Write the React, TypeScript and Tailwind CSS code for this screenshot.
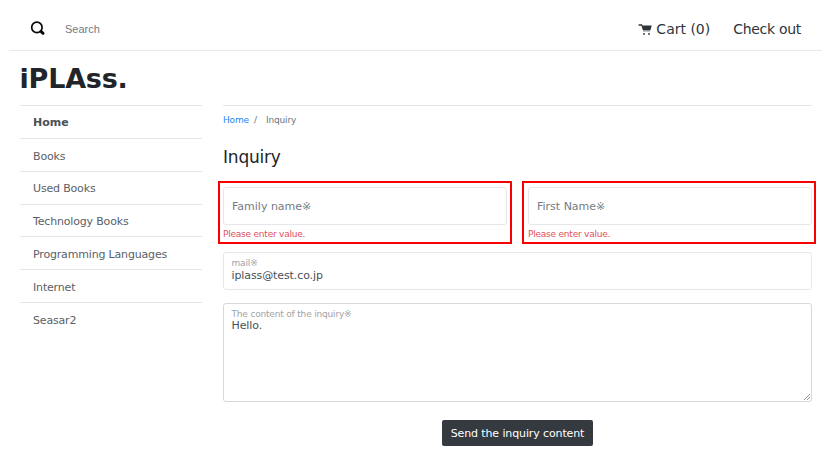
import React from "react";

const categories = ["Home", "Books", "Used Books", "Technology Books", "Programming Languages", "Internet", "Seasar2"];

function NameField({ label, inset }: { label: string; inset: string }) {
  return (
    <div className={"h-[63px] w-[294px] border-2 border-[#f80000] pt-1 " + inset}>
      <div className="flex h-[38px] items-center rounded-[3px] border border-[#e6e7ea] pl-2 pt-[3px] text-[11px] text-[#747b82]">
        {label}
      </div>
      <p className="mt-[3px] text-[9px] leading-[12px] tracking-[-0.22px] text-[#e0505c]">Please enter value.</p>
    </div>
  );
}

function Header() {
  return (
    <header className="mx-[9px] flex h-[51px] w-[813px] items-center border-b border-[#e9e9e9] pl-[21px] pt-[7px]">
      <svg className="h-[16px] w-[16px] shrink-0" viewBox="0 0 16 16" fill="none">
        <circle cx="6.9" cy="6.4" r="5.2" stroke="#080808" strokeWidth="1.7" />
        <path d="M10.9 10.4 13.1 12.4" stroke="#080808" strokeWidth="2.8" strokeLinecap="round" />
      </svg>
      <span className="ml-[19px] pt-[2px] font-['Liberation_Sans',sans-serif] text-[11px] text-[#747b82]">Search</span>
      <div className="ml-auto flex items-center pr-[21px] text-[14px] leading-5 text-[#2e353b]">
        <svg className="mr-1 h-[14px] w-[14px]" viewBox="0 0 14 14" fill="#2e353b">
          <path d="M.5 2.2h3.6l.5 1.4h9.2l-1.5 5H5L3.4 3.8H.7Z" />
          <path d="M5 9.2h7v.8H5Z" opacity=".35" />
          <circle cx="6" cy="12" r=".9" />
          <circle cx="11" cy="12" r=".9" />
        </svg>
        <span>Cart (0)</span>
        <span className="ml-[23px] tracking-[-0.3px]">Check out</span>
      </div>
    </header>
  );
}

export default function App() {
  return (
    <div className="h-[474px] w-[837px] overflow-hidden bg-white font-['DejaVu_Sans','Noto_Sans_CJK_JP',sans-serif]">
      <Header />
      <h1 className="ml-[19.5px] h-[54px] pt-[10px] text-[27px] font-bold leading-[36px] tracking-[-0.2px] text-[#212529]">iPLAss.</h1>
      <div className="flex pl-5">
        <nav className="w-[182px]">
          {categories.map((c, i) => (
            <div
              key={c}
              className={
                "flex h-[32.85px] items-center border-t border-[#e6e6e6] pl-[13px] text-[11px] " +
                (i === 0 ? "pt-[2px] font-bold text-[#495057]" : "pt-[4px] tracking-[-0.17px] text-[#596067]")
              }
            >
              {c}
            </div>
          ))}
        </nav>
        <main className="ml-[21px] w-[589px] border-t border-[#e6e6e6]">
          <div className="flex pt-[8px] text-[9px] leading-3 tracking-[-0.15px] text-[#6c757d]">
            <span className="text-[#2386f8]">Home</span>
            <span className="ml-[5px]">/</span>
            <span className="ml-[9px]">Inquiry</span>
          </div>
          <h2 className="mt-[19px] text-[17px] leading-6 tracking-[-0.2px] text-[#212529]">Inquiry</h2>
          <div className="-ml-[5px] -mr-[4px] mt-[12px] flex justify-between">
            <NameField label="Family name※" inset="px-[3px]" />
            <NameField label="First Name※" inset="pl-[4px] pr-[2px]" />
          </div>
          <div className="mt-2 h-[38px] rounded-[3px] border border-[#e6e7ea] pl-[7.5px] pt-1">
            <p className="text-[9px] leading-3 tracking-[-0.15px] text-[#a3a3a3]">mail※</p>
            <p className="text-[11px] leading-[14px] tracking-[-0.1px] text-[#495057]">iplass@test.co.jp</p>
          </div>
          <div className="mt-[13px] flex h-[99px] rounded-[3px] border border-[#d5d9de] pl-[7.5px] pt-1">
            <div className="grow">
              <p className="text-[9px] leading-3 tracking-[-0.18px] text-[#a3a3a3]">The content of the inquiry※</p>
              <p className="text-[11px] leading-[12px] tracking-[-0.1px] text-[#495057]">Hello.</p>
            </div>
            <svg className="h-[8px] w-[8px] self-end" viewBox="0 0 8 8" stroke="#888" strokeWidth=".9">
              <path d="M1 7 7 1M4 7 7 4" />
            </svg>
          </div>
          <button className="mx-auto mt-[18px] flex h-[26px] w-[151px] items-center justify-center rounded-[2px] bg-[#343a40] pt-[2px] text-[11px] tracking-[-0.12px] text-white">
            Send the inquiry content
          </button>
        </main>
      </div>
    </div>
  );
}
